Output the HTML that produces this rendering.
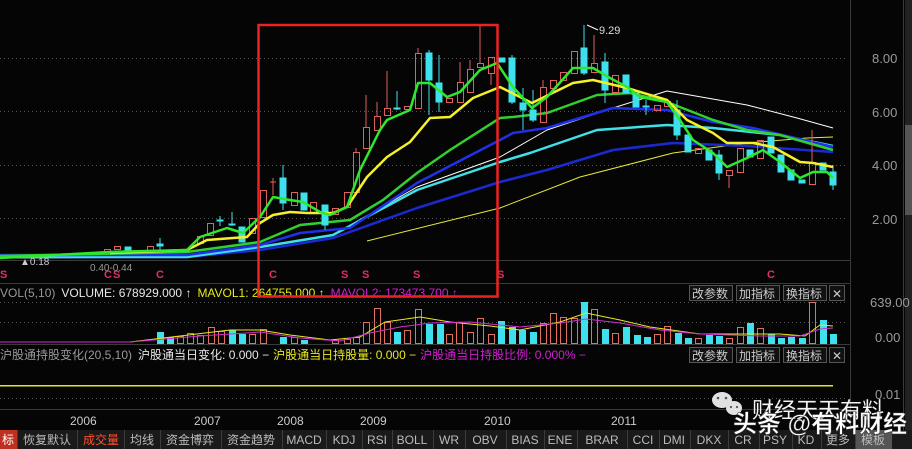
<!DOCTYPE html>
<html><head><meta charset="utf-8"><style>
html,body{margin:0;padding:0;background:#050505;width:912px;height:449px;overflow:hidden}
svg{display:block}
text{font-family:"Liberation Sans","Noto Sans CJK SC",sans-serif}
</style></head><body>
<svg width="912" height="449" viewBox="0 0 912 449" xmlns="http://www.w3.org/2000/svg">
<rect width="912" height="449" fill="#050505"/>
<g stroke="#555" stroke-dasharray="1,3" stroke-width="1">
<line x1="0" y1="58.5" x2="848" y2="58.5"/><line x1="0" y1="111.5" x2="848" y2="111.5"/>
<line x1="0" y1="165.5" x2="848" y2="165.5"/><line x1="0" y1="218.5" x2="848" y2="218.5"/>
<line x1="0" y1="302.5" x2="848" y2="302.5"/><line x1="0" y1="322.5" x2="848" y2="322.5"/>
<line x1="0" y1="398.5" x2="848" y2="398.5"/>
</g>
<g stroke="#3a3a3a" stroke-width="1">
<line x1="0" y1="260.5" x2="850" y2="260.5"/>
<line x1="0" y1="283.5" x2="850" y2="283.5"/>
<line x1="0" y1="344.5" x2="850" y2="344.5"/>
<line x1="0" y1="409.5" x2="850" y2="409.5"/>
<line x1="850.5" y1="0" x2="850.5" y2="430"/>
<line x1="903.5" y1="0" x2="903.5" y2="430"/>
</g>
<rect x="905" y="0" width="7" height="430" fill="#222"/>
<rect x="905" y="125" width="7" height="90" fill="#555"/>
<g fill="#9a9a9a" font-size="13">
<text x="872" y="63">8.00</text><text x="872" y="117">6.00</text>
<text x="872" y="170">4.00</text><text x="872" y="224">2.00</text>
<text x="870" y="307">639.00</text><text x="875" y="342">0.00</text>
<text x="875" y="399">0.01</text>
</g>
<g fill="none" stroke-linejoin="round">
<polyline stroke="#e8e83a" stroke-width="1" points="367,241 500,208 580,177 673,153 747,143 807,138 833,137"/>
<polyline stroke="#1a2ad0" stroke-width="2.5" points="0,257 187,257 260,250 333,238 417,208 500,182 547,170 613,150 673,143 747,146 833,152"/>
<polyline stroke="#ffffff" stroke-width="1" points="0,258 187,257 260,247 333,235 417,187 500,157 547,130 613,108 667,91 747,105 797,118 833,128"/>
<polyline stroke="#40e0e8" stroke-width="2.5" points="0,257 187,257 260,247 333,235 417,190 500,162 530,153 597,130 667,125 713,128 780,135 833,146"/>
<polyline stroke="#2030e8" stroke-width="2.5" points="0,255 187,255 260,245 300,233 350,228 417,183 500,140 513,133 547,128 613,108 667,110 713,122 753,128 833,147"/>
<polyline stroke="#30d030" stroke-width="2.5" points="0,256 187,252 260,242 300,225 350,220 383,200 417,173 450,150 500,118 513,117 547,113 597,95 630,93 667,102 713,120 747,130 780,135 833,150"/>
</g>
<g stroke="#e06060" fill="none" stroke-width="1">
<rect x="104.5" y="249.5" width="6" height="4"/><rect x="114.5" y="246.5" width="6" height="3"/>
<rect x="147.5" y="246.5" width="6" height="4"/><rect x="197.5" y="236.5" width="6" height="7"/>
<rect x="207.5" y="223.5" width="6" height="12"/><rect x="249.5" y="218.5" width="6" height="15"/>
<rect x="260.5" y="190.5" width="6" height="27"/><line x1="273" y1="178" x2="273" y2="195"/><line x1="270" y1="182" x2="276" y2="182"/>
<rect x="291.5" y="192.5" width="6" height="13"/><rect x="310.5" y="202.5" width="6" height="11"/>
<rect x="332.5" y="208.5" width="6" height="6"/><rect x="344.5" y="192.5" width="6" height="15"/>
<rect x="353.5" y="152.5" width="6" height="40"/><line x1="356" y1="148" x2="356" y2="152"/>
<rect x="363.5" y="127.5" width="6" height="21"/><line x1="366" y1="95" x2="366" y2="127"/>
<rect x="374.5" y="116.5" width="6" height="14"/><line x1="377" y1="102" x2="377" y2="116"/>
<rect x="384.5" y="108.5" width="6" height="7"/><line x1="387" y1="71" x2="387" y2="108"/>
<rect x="404.5" y="106.5" width="6" height="3"/>
<rect x="415.5" y="53.5" width="6" height="55"/><line x1="418" y1="48" x2="418" y2="53"/>
<rect x="446.5" y="98.5" width="6" height="4"/>
<rect x="457.5" y="82.5" width="6" height="20"/><line x1="460" y1="62" x2="460" y2="82"/>
<rect x="467.5" y="69.5" width="6" height="23"/><line x1="470" y1="60" x2="470" y2="69"/>
<rect x="477.5" y="63.5" width="6" height="4"/><line x1="480" y1="26" x2="480" y2="63"/>
<rect x="488.5" y="57.5" width="6" height="16"/><line x1="491" y1="73" x2="491" y2="85"/>
<rect x="540.5" y="87.5" width="6" height="35"/><line x1="543" y1="80" x2="543" y2="87"/>
<rect x="550.5" y="80.5" width="6" height="8"/><rect x="560.5" y="72.5" width="6" height="8"/>
<rect x="571.5" y="51.5" width="6" height="22"/>
<rect x="591.5" y="63.5" width="6" height="9"/><line x1="594" y1="35" x2="594" y2="63"/>
<rect x="612.5" y="75.5" width="6" height="17"/>
<rect x="654.5" y="105.5" width="6" height="5"/><rect x="664.5" y="101.5" width="6" height="5"/>
<rect x="695.5" y="148.5" width="6" height="5"/>
<rect x="726.5" y="170.5" width="6" height="5"/><line x1="729" y1="175" x2="729" y2="188"/>
<rect x="737.5" y="148.5" width="6" height="24"/>
<rect x="757.5" y="140.5" width="6" height="18"/>
<rect x="809.5" y="162.5" width="6" height="22"/><line x1="812" y1="130" x2="812" y2="162"/>
</g>
<g fill="#3ee0ee" stroke="#3ee0ee" stroke-width="1">
<rect x="125" y="247" width="6" height="4"/><line x1="160" y1="238" x2="160" y2="250"/><rect x="157" y="244" width="6" height="2"/>
<line x1="220" y1="216" x2="220" y2="226"/><rect x="217" y="220" width="6" height="1"/>
<line x1="232" y1="212" x2="232" y2="226"/><rect x="229" y="224" width="6" height="1"/>
<rect x="239" y="227" width="6" height="15"/>
<line x1="283" y1="165" x2="283" y2="210"/><rect x="280" y="178" width="6" height="25"/>
<rect x="301" y="193" width="6" height="17"/>
<line x1="325" y1="205" x2="325" y2="230"/><rect x="322" y="205" width="6" height="20"/>
<line x1="397" y1="91" x2="397" y2="110"/><rect x="394" y="108" width="6" height="1"/>
<line x1="429" y1="50" x2="429" y2="115"/><rect x="426" y="53" width="6" height="27"/>
<line x1="439" y1="55" x2="439" y2="112"/><rect x="436" y="83" width="6" height="19"/>
<rect x="499" y="58" width="6" height="4"/>
<line x1="512" y1="55" x2="512" y2="104"/><rect x="509" y="58" width="6" height="44"/>
<line x1="523" y1="88" x2="523" y2="130"/><rect x="520" y="103" width="6" height="7"/>
<line x1="533" y1="90" x2="533" y2="122"/><rect x="530" y="110" width="6" height="10"/>
<line x1="584" y1="25" x2="584" y2="75"/><rect x="581" y="48" width="6" height="25"/>
<line x1="605" y1="53" x2="605" y2="103"/><rect x="602" y="62" width="6" height="28"/>
<rect x="623" y="75" width="6" height="18"/>
<rect x="633" y="93" width="6" height="14"/>
<line x1="646" y1="100" x2="646" y2="115"/><rect x="643" y="106" width="6" height="1"/>
<line x1="677" y1="100" x2="677" y2="140"/><rect x="674" y="110" width="6" height="25"/>
<rect x="685" y="135" width="6" height="17"/>
<rect x="706" y="150" width="6" height="10"/>
<line x1="719" y1="150" x2="719" y2="180"/><rect x="716" y="155" width="6" height="18"/>
<rect x="747" y="150" width="6" height="7"/>
<rect x="768" y="137" width="6" height="16"/>
<rect x="778" y="155" width="6" height="17"/>
<rect x="788" y="170" width="6" height="10"/>
<rect x="799" y="180" width="6" height="3"/>
<rect x="820" y="163" width="6" height="7"/>
<line x1="833" y1="165" x2="833" y2="190"/><rect x="830" y="172" width="6" height="13"/>
</g>
<g fill="none" stroke-linejoin="round">
<polyline stroke="#f5f02a" stroke-width="2.5" points="110,253 187,250 207,240 233,238 247,237 260,223 273,215 290,212 307,213 333,213 347,207 367,177 387,157 410,142 430,118 450,117 473,98 500,87 532,103 573,83 593,80 627,88 667,100 687,120 713,133 727,143 753,143 773,147 800,162 813,163 833,167"/>
<polyline stroke="#2ee82e" stroke-width="2.5" points="0,258 110,252 187,250 200,237 227,228 243,233 260,217 273,197 290,200 303,202 320,212 330,215 347,207 360,170 380,130 387,120 410,110 418,83 430,83 447,97 460,92 480,70 497,63 513,87 532,108 547,97 573,68 593,68 610,78 627,87 640,97 667,102 680,120 693,140 713,153 727,167 747,158 763,150 780,162 800,178 813,172 827,172 833,178"/>
</g>
<line x1="587" y1="25" x2="598" y2="30" stroke="#fff" stroke-width="1"/>
<text x="599" y="34" fill="#ddd" font-size="11" font-family="Liberation Mono,monospace">9.29</text>
<text x="20" y="265" fill="#ccc" font-size="10" font-family="Liberation Mono,monospace">▲0.18</text>
<text x="90" y="271" fill="#999" font-size="10" font-family="Liberation Mono,monospace">0.40-0.44</text>
<g font-size="11" font-weight="bold">
<text x="0" y="278" fill="#e03060">S</text>
<text x="104" y="278" fill="#e03060">C</text><text x="113" y="278" fill="#e03060">S</text>
<text x="156" y="278" fill="#e03060">C</text><text x="269" y="278" fill="#e03060">C</text>
<text x="341" y="278" fill="#e03060">S</text><text x="362" y="278" fill="#e03060">S</text>
<text x="413" y="278" fill="#e03060">S</text><text x="497" y="278" fill="#e03060">S</text>
<text x="767" y="278" fill="#e03060">C</text>
</g>
<text x="0" y="297" font-size="12"><tspan fill="#999">VOL(5,10)</tspan><tspan fill="#e8e8e8" dx="6">VOLUME: 678929.000 ↑</tspan><tspan fill="#e8e820" dx="6">MAVOL1: 264755.000 ↑</tspan><tspan fill="#d020d0" dx="6">MAVOL2: 173473.700 ↑</tspan></text>
<g font-size="12" fill="#ccc">
<rect x="689.5" y="285.5" width="43" height="15" fill="#111" stroke="#555"/><text x="692" y="298">改参数</text>
<rect x="736.5" y="285.5" width="43" height="15" fill="#111" stroke="#555"/><text x="739" y="298">加指标</text>
<rect x="783.5" y="285.5" width="43" height="15" fill="#111" stroke="#555"/><text x="786" y="298">换指标</text>
<rect x="829.5" y="285.5" width="15" height="15" fill="#111" stroke="#555"/><text x="832" y="298">✕</text>
<rect x="689.5" y="347.5" width="43" height="15" fill="#111" stroke="#555"/><text x="692" y="360">改参数</text>
<rect x="736.5" y="347.5" width="43" height="15" fill="#111" stroke="#555"/><text x="739" y="360">加指标</text>
<rect x="783.5" y="347.5" width="43" height="15" fill="#111" stroke="#555"/><text x="786" y="360">换指标</text>
<rect x="829.5" y="347.5" width="15" height="15" fill="#111" stroke="#555"/><text x="832" y="360">✕</text>
</g>
<g fill="#3ee0ee">
<rect x="157" y="332" width="7" height="12"/><rect x="167" y="337" width="7" height="7"/><rect x="229" y="330" width="7" height="14"/><rect x="239" y="334" width="7" height="10"/><rect x="280" y="337" width="7" height="7"/><rect x="301" y="340" width="7" height="4"/><rect x="394" y="332" width="7" height="12"/><rect x="426" y="324" width="7" height="20"/><rect x="437" y="324" width="7" height="20"/><rect x="498" y="321" width="7" height="23"/><rect x="509" y="327" width="7" height="17"/><rect x="519" y="330" width="7" height="14"/><rect x="530" y="332" width="7" height="12"/><rect x="581" y="302" width="7" height="42"/><rect x="602" y="329" width="7" height="15"/><rect x="623" y="327" width="7" height="17"/><rect x="634" y="335" width="7" height="9"/><rect x="644" y="337" width="7" height="7"/><rect x="675" y="333" width="7" height="11"/><rect x="685" y="338" width="7" height="6"/><rect x="706" y="335" width="7" height="9"/><rect x="716" y="336" width="7" height="8"/><rect x="747" y="323" width="7" height="21"/><rect x="768" y="334" width="7" height="10"/><rect x="778" y="338" width="7" height="6"/><rect x="788" y="337" width="7" height="7"/><rect x="799" y="338" width="7" height="6"/><rect x="820" y="320" width="7" height="24"/><rect x="830" y="334" width="7" height="10"/>
</g>
<g fill="none" stroke="#e07060" stroke-width="1">
<rect x="177.5" y="336.5" width="6" height="7"/><rect x="187.5" y="333.5" width="6" height="10"/><rect x="197.5" y="335.5" width="6" height="8"/><rect x="208.5" y="327.5" width="6" height="16"/><rect x="218.5" y="331.5" width="6" height="12"/><rect x="249.5" y="334.5" width="6" height="9"/><rect x="260.5" y="329.5" width="6" height="14"/><rect x="291.5" y="337.5" width="6" height="6"/><rect x="332.5" y="340.5" width="6" height="3"/><rect x="344.5" y="339.5" width="6" height="4"/><rect x="353.5" y="337.5" width="6" height="6"/><rect x="363.5" y="322.5" width="6" height="21"/><rect x="374.5" y="308.5" width="6" height="35"/><rect x="384.5" y="322.5" width="6" height="21"/><rect x="404.5" y="330.5" width="6" height="13"/><rect x="415.5" y="309.5" width="6" height="34"/><rect x="446.5" y="334.5" width="6" height="9"/><rect x="456.5" y="322.5" width="6" height="21"/><rect x="467.5" y="332.5" width="6" height="11"/><rect x="477.5" y="318.5" width="6" height="25"/><rect x="488.5" y="334.5" width="6" height="9"/><rect x="540.5" y="323.5" width="6" height="20"/><rect x="550.5" y="313.5" width="6" height="30"/><rect x="560.5" y="317.5" width="6" height="26"/><rect x="571.5" y="318.5" width="6" height="25"/><rect x="591.5" y="309.5" width="6" height="34"/><rect x="612.5" y="333.5" width="6" height="10"/><rect x="654.5" y="334.5" width="6" height="9"/><rect x="664.5" y="326.5" width="6" height="17"/><rect x="695.5" y="338.5" width="6" height="5"/><rect x="726.5" y="338.5" width="6" height="5"/><rect x="737.5" y="327.5" width="6" height="16"/><rect x="757.5" y="328.5" width="6" height="15"/><rect x="809.5" y="302.5" width="6" height="41"/>
</g>
<polyline fill="none" stroke="#e8e820" stroke-width="1" points="130,342 180,336 230,330 260,330 290,335 330,340 360,337 385,322 420,317 450,322 490,326 520,330 560,322 586,313 620,320 650,327 700,334 745,334 780,334 805,336 820,325 833,326"/>
<polyline fill="none" stroke="#d030d0" stroke-width="1" points="0,342 130,342 200,336 260,332 300,338 340,341 370,333 400,327 430,323 470,322 520,327 560,323 586,319 620,323 660,330 700,334 760,336 800,336 820,329 833,328"/>
<text x="0" y="359" font-size="12"><tspan fill="#999">沪股通持股变化(20,5,10)</tspan><tspan fill="#e8e8e8" dx="6">沪股通当日变化: 0.000 −</tspan><tspan fill="#e8e820" dx="4">沪股通当日持股量: 0.000 −</tspan><tspan fill="#d020d0" dx="4">沪股通当日持股比例: 0.000% −</tspan></text>
<rect x="0" y="385" width="833" height="1.5" fill="#e8e820"/>
<rect x="258.5" y="25" width="239" height="271.5" fill="none" stroke="#ee2222" stroke-width="2.5"/>
<g fill="#ccc" font-size="12">
<text x="70" y="425">2006</text><text x="194" y="425">2007</text><text x="277" y="425">2008</text><text x="360" y="425">2009</text><text x="484" y="425">2010</text><text x="611" y="425">2011</text>
</g>
<rect x="0" y="430" width="912" height="19" fill="#1a1a1a"/>
<rect x="0" y="430" width="17" height="19" fill="#c03020"/>
<rect x="855" y="430" width="37" height="19" fill="#555"/>
<g stroke="#3c3c3c"><line x1="17.5" y1="430" x2="17.5" y2="449"/><line x1="77.5" y1="430" x2="77.5" y2="449"/><line x1="124.5" y1="430" x2="124.5" y2="449"/><line x1="160.5" y1="430" x2="160.5" y2="449"/><line x1="221.5" y1="430" x2="221.5" y2="449"/><line x1="282.5" y1="430" x2="282.5" y2="449"/><line x1="326.5" y1="430" x2="326.5" y2="449"/><line x1="362.5" y1="430" x2="362.5" y2="449"/><line x1="392.5" y1="430" x2="392.5" y2="449"/><line x1="433.5" y1="430" x2="433.5" y2="449"/><line x1="465.5" y1="430" x2="465.5" y2="449"/><line x1="506.5" y1="430" x2="506.5" y2="449"/><line x1="544.5" y1="430" x2="544.5" y2="449"/><line x1="577.5" y1="430" x2="577.5" y2="449"/><line x1="627.5" y1="430" x2="627.5" y2="449"/><line x1="659.5" y1="430" x2="659.5" y2="449"/><line x1="690.5" y1="430" x2="690.5" y2="449"/><line x1="728.5" y1="430" x2="728.5" y2="449"/><line x1="759.5" y1="430" x2="759.5" y2="449"/><line x1="792.5" y1="430" x2="792.5" y2="449"/><line x1="821.5" y1="430" x2="821.5" y2="449"/><line x1="855.5" y1="430" x2="855.5" y2="449"/></g>
<g fill="#bbb" font-size="12" text-anchor="middle">
<text x="8" y="444" fill="#fff">标</text><text x="47" y="444">恢复默认</text><text x="101" y="444" fill="#ff5030">成交量</text><text x="142" y="444">均线</text><text x="190" y="444">资金博弈</text><text x="251" y="444">资金趋势</text><text x="304" y="444">MACD</text><text x="344" y="444">KDJ</text><text x="377" y="444">RSI</text><text x="412" y="444">BOLL</text><text x="449" y="444">WR</text><text x="485" y="444">OBV</text><text x="525" y="444">BIAS</text><text x="560" y="444">ENE</text><text x="602" y="444">BRAR</text><text x="643" y="444">CCI</text><text x="674" y="444">DMI</text><text x="709" y="444">DKX</text><text x="743" y="444">CR</text><text x="775" y="444">PSY</text><text x="806" y="444">KD</text><text x="838" y="444">更多</text><text x="873" y="444">模板</text>
</g>
<g fill="#f4f4f4" opacity="0.92">
<ellipse cx="722" cy="400" rx="10" ry="8"/><ellipse cx="734" cy="408" rx="8" ry="7"/>
</g>
<g fill="#555"><circle cx="718" cy="398" r="1.3"/><circle cx="726" cy="398" r="1.3"/><circle cx="731" cy="407" r="1.1"/><circle cx="737" cy="407" r="1.1"/></g>
<text x="752" y="418" fill="#f4f4f4" font-size="22">财经天天有料</text>
<text x="733" y="432" fill="#fff" font-size="24" font-weight="bold" stroke="#333" stroke-width="0.5">头条 @有料财经</text>
</svg>
</body></html>
